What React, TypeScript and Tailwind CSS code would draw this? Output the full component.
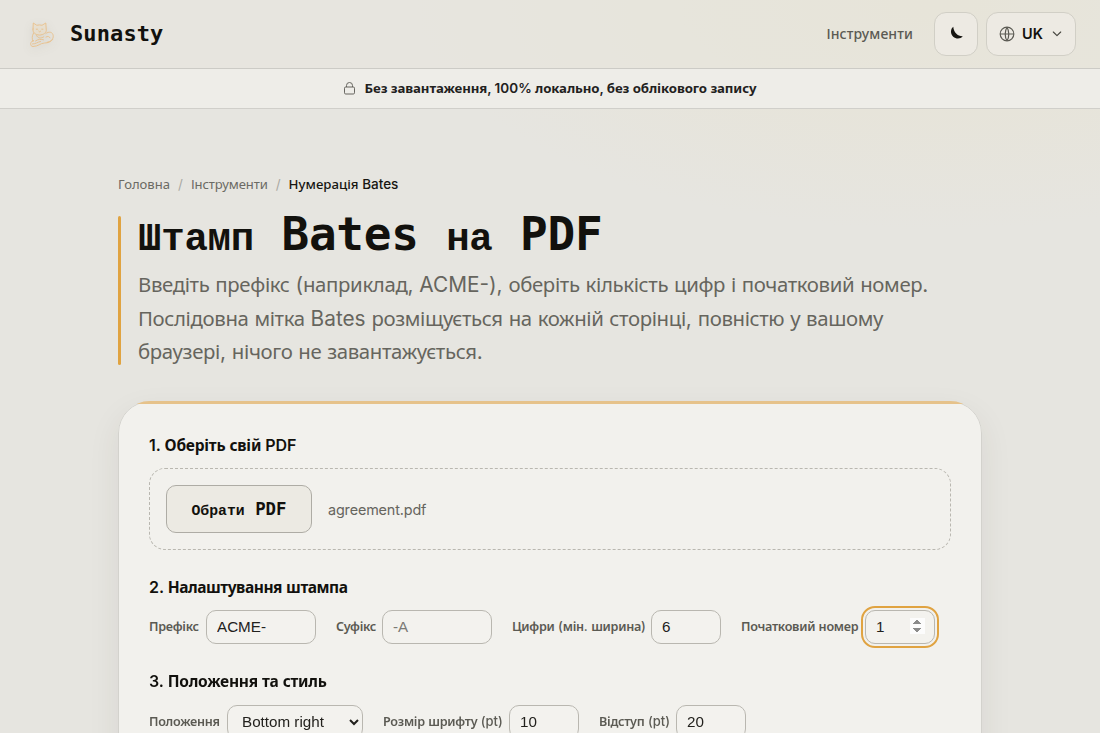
import React from 'react';

// Latin, digits and punctuation use one face, Cyrillic letters use another
const Mixed = ({ text, cyr = 'text-[0.98em]' }: { text: string; cyr?: string }) => (
  <>
    {text.split(/([\u0400-\u04FF]+)/).map((part, i) =>
      i % 2 === 1 ? (
        <span key={i} className={`font-['Noto_Sans',sans-serif] ${cyr}`}>
          {part}
        </span>
      ) : (
        <span key={i}>{part}</span>
      )
    )}
  </>
);

const MixedMono = ({ text }: { text: string }) => (
  <>
    {text.split(/([\u0400-\u04FF]+)/).map((part, i) => (
      <span key={i} className={i % 2 === 1 ? "font-['Liberation_Mono',monospace] text-[0.85em]" : ''}>
        {part}
      </span>
    ))}
  </>
);

const headingCyr = 'font-bold text-[0.97em] tracking-[-0.03em]';
const headingCyrWide = 'font-bold text-[0.97em] tracking-[-0.015em]';
const labelCyr = 'font-semibold text-[0.97em] tracking-[-0.022em]';
const leadCyr = 'text-[0.98em] tracking-[-0.0175em]';

const CatLogo = () => (
  <svg
    width="28"
    height="30"
    viewBox="0 0 28 30"
    fill="none"
    stroke="#e9c08a"
    strokeWidth="0.9"
    strokeLinecap="round"
    strokeLinejoin="round"
    className="drop-shadow-[0_3px_5px_rgba(60,55,40,0.15)]"
  >
    <path d="M5 10 5.300 4l3.500 2.300Q11.500 5.500 14 6.300L17.800 4l.4 6c.8 3.500-2.700 6-6.700 6s-7.200-2.500-6.500-6Z" fill="#eedfc8" fillOpacity="0.5" />
    <path d="M8.300 10.200h1.200M13.800 10.200H15M10.800 12.200l.9.700.9-.7M5.600 14c-2 3.500-1.600 6-.6 8.500M17.800 14.500c3-2.500 7.200-1.500 7.400 2.300.2 3.700-2.500 6-6.200 6.500" />
    <path d="M5.500 21.500c-3.500.5-4 6-.5 6 5.500-.2 7-3.200 11.500-3.500 3 0 6.500-1 8.200-3.500" />
    <path d="M8.500 16.500c1.500 2.800 4.500 3.300 7.300 1.300M7.500 22c2.500-2 5.500-2 8-1.200M4.500 25c3 .2 5-2 8-2.500M18 18c1.500-1 3.500-.7 4 .8" />
  </svg>
);

interface FieldProps {
  label: string;
  labelWidth: string;
  width: string;
  defaultValue?: string;
  placeholder?: string;
  type?: string;
  autoFocus?: boolean;
}

const Field = ({ label, labelWidth, width, type = 'text', ...rest }: FieldProps) => (
  <label className="flex items-center gap-1.5 whitespace-nowrap">
    <span className={labelWidth}><Mixed text={label} cyr={labelCyr} /></span>
    <input
      type={type}
      className={`${width} h-[34px] rounded-[10px] border border-[#b9b7b0] bg-[#f3f2ee] pl-2.5 pr-[9px] pb-0.5 font-['Liberation_Sans',sans-serif] text-[15.2px] font-normal text-[#22211d] placeholder:text-[#7b7a76] focus:outline-2 focus:outline-offset-2 focus:outline-[#e0a341]`}
      {...rest}
    />
  </label>
);

const App = () => {
  return (
    <div className="relative h-screen overflow-hidden bg-[#e6e5e0] bg-[radial-gradient(ellipse_520px_230px_at_85%_0%,#e7e3d4_0%,#e6e5e000_100%)] font-[Inter,sans-serif] text-[#12110d]">
      <header className="flex h-[69px] items-center justify-between border-b border-[#cccbc6] bg-[#e8e6de]/50 pl-7 pr-6">
        <div className="flex items-center gap-3.5">
          <CatLogo />
          <span className="font-['DejaVu_Sans_Mono',monospace] text-[22px] font-bold leading-none tracking-[0.1px]">Sunasty</span>
        </div>
        <div className="flex items-center gap-2">
          <a className="mr-[13px] text-sm font-medium text-[#5b5a53]"><Mixed text="Інструменти" cyr="tracking-[0.007em]" /></a>
          <button className="flex size-11 items-center justify-center rounded-xl border border-[#d1cfc6] bg-[#edeae3]">
            <svg className="-mt-0.5 ml-0.5" width="14" height="14" viewBox="0 0 14 14" fill="#171612">
              <path d="M3.300.8C.2 3 .3 8 3.200 10.700c2.900 2.600 7.300 2.400 9.600-.4C8 10.600 3.600 6.500 3.300.8Z" />
            </svg>
          </button>
          <button className="flex h-11 w-[90px] items-center rounded-xl border border-[#d1cfc6] bg-[#edeae3] px-3 text-sm font-semibold">
            <svg width="16" height="16" viewBox="0 0 16 16" fill="none" stroke="#5b5a53" strokeWidth="1.200">
              <circle cx="8" cy="8" r="6.800" />
              <path d="M1.200 8h13.600M8 1.200c-2.400 3.800-2.400 9.800 0 13.600M8 1.200c2.400 3.800 2.400 9.800 0 13.600" />
            </svg>
            <span className="ml-[7px] text-[14.5px]">UK</span>
            <svg className="ml-[9px]" width="10" height="6" viewBox="0 0 10 6" fill="none" stroke="#45443e" strokeWidth="1.100" strokeLinecap="round" strokeLinejoin="round">
              <path d="m1.300 1 3.700 3.700L8.700 1" />
            </svg>
          </button>
        </div>
      </header>

      <div className="flex h-10 items-center justify-center gap-2.5 border-b border-[#d0cfca] bg-[#eeede8] text-[13.5px] font-semibold text-[#22211d]">
        <svg width="11" height="13" viewBox="0 0 11 13" fill="none" stroke="#66655f" strokeWidth="1">
          <rect x=".5" y="5" width="10" height="7" rx="1.200" />
          <path d="M2.500 5V3.500a3 3 0 0 1 6 0V5" />
        </svg>
        <span><Mixed text="Без завантаження, 100% локально, без облікового запису" cyr="font-bold text-[0.98em] tracking-[-0.008em]" /></span>
      </div>

      <main className="mx-auto w-[864px] pt-[65px]">
        <nav className="flex h-5 items-center text-[13.5px] text-[#6b6a64]">
          <a><Mixed text="Головна" cyr="text-[0.97em]" /></a>
          <span className="mx-2 text-[#aaa9a3]">/</span>
          <a><Mixed text="Інструменти" cyr="text-[0.97em] tracking-[-0.008em]" /></a>
          <span className="mx-2 text-[#aaa9a3]">/</span>
          <span className="font-medium text-[#171612]"><Mixed text="Нумерація Bates" /></span>
        </nav>

        <div className="relative mt-[22px] h-[149px] pl-5">
          <div className="absolute inset-y-0 left-0 w-[3px] rounded-sm bg-[#e0a341]" />
          <h1 className="h-11 whitespace-nowrap font-['DejaVu_Sans_Mono',monospace] text-[46px] font-bold leading-[36px] tracking-[-0.25px]">
            <MixedMono text="Штамп Bates на PDF" />
          </h1>
          <p className="mt-2 whitespace-nowrap text-[20.8px] leading-[33.5px] text-[#66655e]">
            <Mixed text="Введіть префікс (наприклад, ACME-), оберіть кількість цифр і початковий номер." cyr={leadCyr} /><br />
            <Mixed text="Послідовна мітка Bates розміщується на кожній сторінці, повністю у вашому" cyr={leadCyr} /><br />
            <Mixed text="браузері, нічого не завантажується." cyr={leadCyr} />
          </p>
        </div>

        <div className="relative mt-9 h-[500px] overflow-hidden rounded-[32px] shadow-[0_12px_32px_rgba(60,55,40,0.08)]">
          <section className="h-full rounded-[32px] border border-[#d3d2cd] bg-[#f2f1ed] px-[30px] pt-[31px]">
            <h2 className="h-6 text-base font-semibold leading-6"><Mixed text="1. Оберіть свій PDF" cyr={headingCyrWide} /></h2>
            <div className="mt-[11px] flex h-[82px] items-center gap-4 rounded-2xl border border-dashed border-[#b9b7b0] px-4">
              <button className="h-12 w-[146px] whitespace-nowrap rounded-[10px] border border-[#aeaca5] bg-[#eceae3] font-['DejaVu_Sans_Mono',monospace] text-[17.4px] font-bold">
                <MixedMono text="Обрати PDF" />
              </button>
              <span className="pt-0.5 text-[14.4px] tracking-[-0.01em] text-[#66655e]">agreement.pdf</span>
            </div>

            <h2 className="mt-[25px] h-6 text-base font-semibold leading-6"><Mixed text="2. Налаштування штампа" cyr={headingCyr} /></h2>
            <div className="mt-[11px] flex gap-5 text-[13px] font-medium text-[#5b5a53]">
              <Field label="Префікс" labelWidth="w-[51px]" width="w-[110px]" defaultValue="ACME-" />
              <Field label="Суфікс" labelWidth="w-10" width="w-[110px]" placeholder="-A" />
              <Field label="Цифри (мін. ширина)" labelWidth="w-[133px]" width="w-[70px]" type="number" defaultValue="6" />
              <Field label="Початковий номер" labelWidth="w-[118px]" width="w-[70px]" type="number" defaultValue="1" autoFocus />
            </div>

            <h2 className="mt-[25px] h-6 text-base font-semibold leading-6"><Mixed text="3. Положення та стиль" cyr={headingCyrWide} /></h2>
            <div className="mt-3 flex gap-5 text-[13px] font-medium text-[#5b5a53]">
              <label className="flex items-center gap-1.5 whitespace-nowrap">
                <span className="w-[72px]"><Mixed text="Положення" cyr={labelCyr} /></span>
                <select className="h-[34px] w-[136px] rounded-[10px] border border-[#b9b7b0] bg-[#f3f2ee] px-2.5 pb-0.5 font-['Liberation_Sans',sans-serif] text-[15.2px] font-normal text-[#22211d]">
                  <option>Bottom right</option>
                </select>
              </label>
              <Field label="Розмір шрифту (pt)" labelWidth="w-[120px]" width="w-[70px]" type="number" defaultValue="10" />
              <Field label="Відступ (pt)" labelWidth="w-[71px]" width="w-[70px]" type="number" defaultValue="20" />
            </div>
          </section>
          <div className="absolute inset-x-0 top-0 h-[3px] bg-[#e6c28a]" />
        </div>
      </main>
    </div>
  );
};

export default App;
